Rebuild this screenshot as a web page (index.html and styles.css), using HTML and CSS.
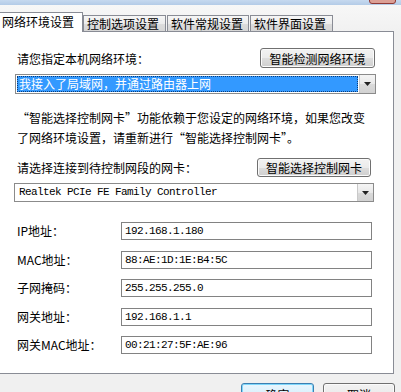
FILE: index.html
```html
<!DOCTYPE html>
<html lang="zh-CN">
<head>
<meta charset="utf-8">
<title>网络环境设置</title>
<link rel="stylesheet" href="styles.css">
</head>
<body>
<div class="titlebar"><span class="close"></span></div>
<div class="tabs">
  <div class="tab active">网络环境设置</div>
  <div class="tab t2">控制选项设置</div>
  <div class="tab t3">软件常规设置</div>
  <div class="tab t4">软件界面设置</div>
</div>
<div class="panel">
  <div class="row r1">
    <span>请您指定本机网络环境：</span>
    <button class="btn b1">智能检测网络环境</button>
  </div>
  <div class="combo c1">
    <div class="combo-val sel">我接入了局域网，并通过路由器上网</div>
    <div class="combo-arrow"><svg width="7" height="4" viewBox="0 0 7 4"><path d="M0 0h7L3.5 4z" fill="#222"/></svg></div>
  </div>
  <p class="note">“智能选择控制网卡”功能依赖于您设定的网络环境，如果您改变<br>了网络环境设置，请重新进行“智能选择控制网卡”。</p>
  <div class="row r3">
    <span>请选择连接到待控制网段的网卡：</span>
    <button class="btn b2">智能选择控制网卡</button>
  </div>
  <div class="combo c2">
    <div class="combo-val mono">Realtek PCIe FE Family Controller</div>
    <div class="combo-arrow"><svg width="7" height="4" viewBox="0 0 7 4"><path d="M0 0h7L3.5 4z" fill="#222"/></svg></div>
  </div>
  <div class="fields">
    <span class="lbl">IP地址：</span><div class="field">192.168.1.180</div>
    <span class="lbl">MAC地址：</span><div class="field">88:AE:1D:1E:B4:5C</div>
    <span class="lbl">子网掩码：</span><div class="field">255.255.255.0</div>
    <span class="lbl">网关地址：</span><div class="field">192.168.1.1</div>
    <span class="lbl">网关MAC地址：</span><div class="field">00:21:27:5F:AE:96</div>
  </div>
</div>
<div class="footer">
  <button class="btn ok">确定</button>
  <button class="btn cancel">取消</button>
</div>
</body>
</html>
```

FILE: styles.css
```css
html, body {
  margin: 0;
  padding: 0;
}
body {
  width: 401px;
  height: 392px;
  overflow: hidden;
  background: #f0f0f0;
  font-family: "Noto Sans CJK SC", sans-serif;
  font-size: 12px;
  color: #000;
}
.titlebar {
  position: relative;
  height: 5px;
  background: linear-gradient(#c6d9ef, #b3cbe7);
}
.close {
  position: absolute;
  left: 369px;
  top: -10px;
  width: 25px;
  height: 12px;
  border: 1px solid #8f3a36;
  border-radius: 3px;
  background: #dc9f95;
}
.tabs {
  display: flex;
  align-items: flex-end;
  height: 26px;
  background: linear-gradient(#f7f7f7, #f1f1f1);
}
.tab {
  box-sizing: border-box;
  height: 16px;
  border: 1px solid #898c95;
  border-bottom: none;
  padding-left: 3px;
  line-height: 15px;
  white-space: nowrap;
  background: linear-gradient(#f6f6f6 0%, #ececec 50%, #dcdcdc 51%, #d6d6d6 100%);
}
.tab.active {
  position: relative;
  z-index: 1;
  height: 20px;
  width: 84px;
  margin-left: -1px;
  margin-bottom: -1px;
  padding-left: 2px;
  line-height: 17px;
  background: #fff;
}
.t2 { width: 83px; }
.t3 { width: 82px; margin-left: 1px; }
.t4 { width: 83px; margin-left: 1px; }
.panel {
  box-sizing: border-box;
  width: 395px;
  height: 343px;
  margin-left: -1px;
  border: 1px solid #898c95;
  background: #fff;
  padding: 0 18px 0 17px;
  overflow: hidden;
}
.row {
  display: flex;
  align-items: center;
  justify-content: space-between;
  height: 20px;
}
.r1 { margin-top: 16px; }
.r3 { margin-top: 9px; }
.btn {
  box-sizing: border-box;
  height: 20px;
  padding: 0;
  border: 1px solid #707070;
  border-radius: 3px;
  background: linear-gradient(#f2f2f2 0%, #ebebeb 50%, #dddddd 51%, #cfcfcf 100%);
  box-shadow: inset 0 0 0 1px #fbfbfb;
  font-family: "Noto Sans CJK SC", sans-serif;
  font-size: 12px;
  line-height: 17px;
  color: #000;
}
.b1 { width: 115px; }
.b2 { width: 114px; height: 19px; margin-right: 4px; }
.combo {
  box-sizing: border-box;
  display: flex;
  border: 1px solid #8b8b8b;
  background: #fff;
}
.c1 {
  margin-top: 6px;
  margin-left: -2px;
  width: 361px;
  height: 20px;
}
.c2 {
  margin-top: 6px;
  margin-left: -3px;
  width: 360px;
  height: 19px;
}
.combo-val {
  flex: 1;
  white-space: nowrap;
  overflow: hidden;
}
.sel {
  box-sizing: border-box;
  margin: 1px 1px 1px 1px;
  padding-left: 2px;
  background: #3399ff;
  color: #fff;
  outline: 1px dotted #0c3d7a;
  outline-offset: -1px;
  line-height: 16px;
}
.mono {
  padding-left: 4px;
  font-family: "Liberation Mono", monospace;
  font-size: 11px;
  letter-spacing: -0.6px;
  line-height: 17px;
}
.combo-arrow {
  box-sizing: border-box;
  width: 16px;
  display: flex;
  align-items: center;
  justify-content: center;
  border-left: 1px solid #c9c9c9;
  background: linear-gradient(#f5f5f5 0%, #e9e9e9 50%, #dadada 51%, #d2d2d2 100%);
}
.note {
  margin: 14px 0 0;
  line-height: 20px;
  white-space: nowrap;
}
.fields {
  display: grid;
  grid-template-columns: 104px 251px;
  grid-auto-rows: 18px;
  row-gap: 10.5px;
  margin-top: 20px;
  align-items: center;
}
.lbl {
  white-space: nowrap;
  line-height: 18px;
}
.field {
  box-sizing: border-box;
  height: 18px;
  border: 1px solid #828282;
  padding-left: 3px;
  font-family: "Liberation Mono", monospace;
  font-size: 11px;
  letter-spacing: -0.6px;
  line-height: 16px;
}
.footer {
  display: flex;
  justify-content: flex-end;
  gap: 9px;
  padding: 9px 6px 0 0;
}
.footer .btn {
  height: 23px;
  line-height: 20px;
}
.ok {
  width: 73px;
  border-color: #3c7fb1;
  box-shadow: inset 0 0 0 1px #7fd7fb;
  background: linear-gradient(#eaf6fd 0%, #d9f0fc 50%, #bee6fd 51%, #a7d9f5 100%);
}
.cancel { width: 72px; }
```
